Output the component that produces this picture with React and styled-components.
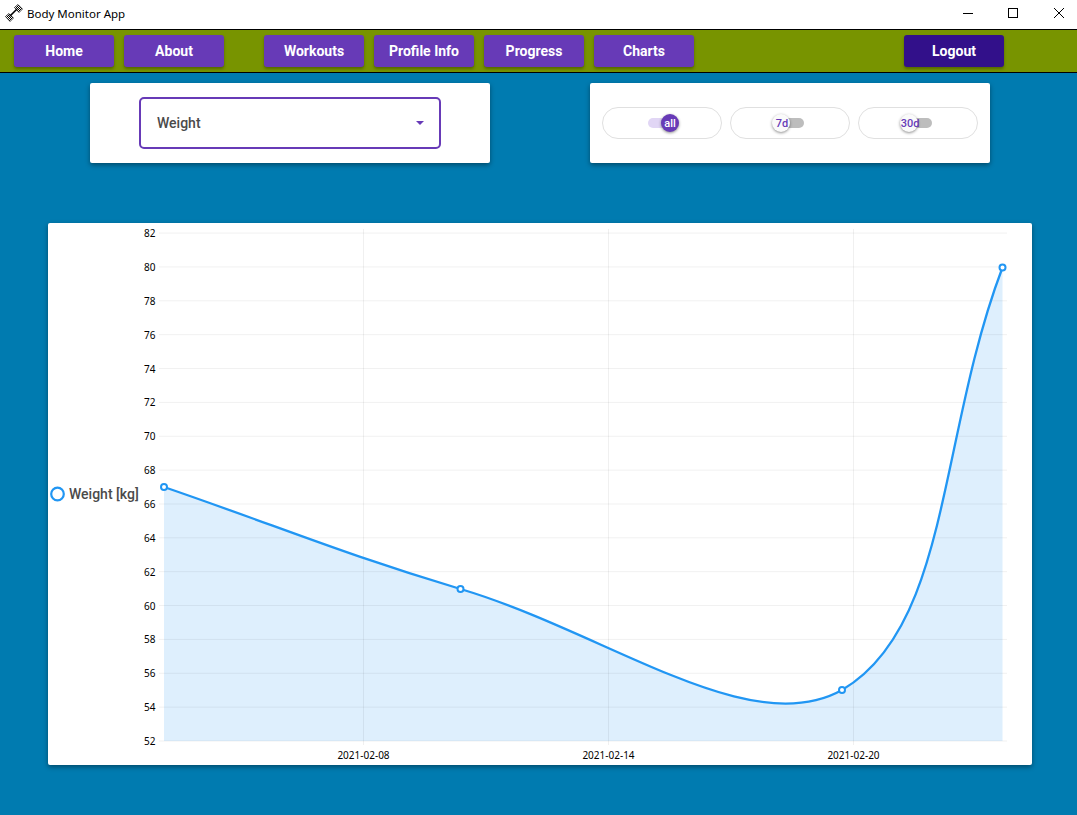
import React from "react";
import styled, { createGlobalStyle } from "styled-components";

const GlobalStyle = createGlobalStyle`
  html, body {
    margin: 0;
    padding: 0;
    background: #007bb0;
  }
  #root {
    min-height: 815px;
  }
`;

const TitleBar = styled.div`
  height: 29px;
  box-sizing: border-box;
  display: flex;
  align-items: center;
  background: #fff;
  padding: 0 13px 3px 5px;
  font-family: "Noto Sans", "Open Sans", sans-serif;
  font-size: 11.5px;
  color: #000;
`;

const AppName = styled.span`
  margin-left: 4px;
  flex: 1;
`;

const WindowButton = styled.svg`
  width: 10px;
  height: 10px;
  margin-left: ${({ $gap }) => $gap}px;
`;

const NavBar = styled.nav`
  height: 42px;
  display: flex;
  align-items: center;
  gap: 10px;
  padding-left: 14px;
  background: #789400;
  border-top: 1px solid #000;
  border-bottom: 1px solid #000;
`;

const NavButton = styled.div`
  width: 100px;
  height: 32px;
  display: flex;
  align-items: center;
  justify-content: center;
  border-radius: 3px;
  background: ${({ $dark }) => ($dark ? "#32108a" : "#673ab7")};
  color: #fff;
  font-family: Roboto, sans-serif;
  font-size: 14px;
  font-weight: 700;
  white-space: nowrap;
  margin-left: ${({ $gap }) => $gap || 0}px;
  box-shadow: 0 2px 3px rgba(0, 0, 0, 0.3);
`;

const TopRow = styled.div`
  display: flex;
  gap: 100px;
  padding: 10px 0 0 90px;
`;

const Card = styled.div`
  width: 400px;
  height: 80px;
  box-sizing: border-box;
  background: #fff;
  border-radius: 2px;
  box-shadow: 0 2px 5px rgba(0, 0, 0, 0.4);
  display: flex;
  align-items: center;
  justify-content: ${({ $spread }) => ($spread ? "flex-start" : "center")};
  gap: 8px;
  padding: ${({ $spread }) => ($spread ? "0 12px" : "0")};
`;

const Select = styled.div`
  width: 302px;
  height: 52px;
  box-sizing: border-box;
  border: 2px solid #673ab7;
  border-radius: 5px;
  display: flex;
  align-items: center;
  justify-content: space-between;
  padding: 0 15px 0 16px;
  font-family: Roboto, sans-serif;
  font-size: 14px;
  font-weight: 500;
  color: #4a4a4a;
`;

const Caret = styled.div`
  width: 0;
  height: 0;
  border-left: 4px solid transparent;
  border-right: 4px solid transparent;
  border-top: 4px solid #673ab7;
`;

const Pill = styled.div`
  width: 120px;
  height: 32px;
  box-sizing: border-box;
  border: 1px solid #e0e0e0;
  border-radius: 16px;
  display: flex;
  align-items: center;
  justify-content: center;
`;

const Track = styled.div`
  position: relative;
  width: 28px;
  height: 10px;
  border-radius: 5px;
  background: ${({ $on }) => ($on ? "#e1d6f5" : "#bdbdbd")};
`;

const Thumb = styled.div`
  position: absolute;
  top: -4px;
  left: ${({ $on }) => ($on ? "13px" : "-4px")};
  width: 18px;
  height: 18px;
  box-sizing: border-box;
  padding-left: ${({ $on }) => ($on ? "0" : "2px")};
  border-radius: 50%;
  display: flex;
  align-items: center;
  justify-content: center;
  background: ${({ $on }) => ($on ? "#673ab7" : "#fafafa")};
  color: ${({ $on }) => ($on ? "#fff" : "#673ab7")};
  font-family: Roboto, sans-serif;
  font-size: 11px;
  font-weight: 500;
  box-shadow: 0 1px 3px rgba(0, 0, 0, 0.45);
`;

const ChartCard = styled.div`
  width: 984px;
  height: 542px;
  margin: 60px 0 0 48px;
  background: #fff;
  border-radius: 2px;
  box-shadow: 0 2px 5px rgba(0, 0, 0, 0.4);
`;

const ChartSvg = styled.svg`
  display: block;
`;

const AxisLabel = styled.text`
  font-family: "Noto Sans", "Open Sans", sans-serif;
  font-size: 10px;
  fill: #000;
`;

const LegendLabel = styled.text`
  font-family: Roboto, sans-serif;
  font-size: 14px;
  font-weight: 500;
  fill: #4a4a4a;
`;

const yTicks = [82, 80, 78, 76, 74, 72, 70, 68, 66, 64, 62, 60, 58, 56, 54, 52];
const xTicks = [
  { x: 363, label: "2021-02-08" },
  { x: 608, label: "2021-02-14" },
  { x: 853, label: "2021-02-20" },
];
const points = [
  [164, 487],
  [460.5, 589],
  [842, 690],
  [1002.5, 267.5],
];
const linePath =
  "M164 487 C282.6 527.8 340.5 553.1 460.5 589 C608 633 750 742 842 690 C950 627 938.3 436.5 1002.5 267.5";

const yFor = (v) => 741 - (v - 52) * 16.93;

function Chart() {
  return (
    <ChartSvg width="984" height="542" viewBox="48 223 984 542">
      <path d={`${linePath} L1002.5 741 L164 741 Z`} fill="#2196f3" fillOpacity="0.15" />
      {yTicks.map((v) => (
        <g key={v}>
          <line x1="159" x2="1007" y1={yFor(v)} y2={yFor(v)} stroke="#000" strokeOpacity="0.06" />
          <AxisLabel x="155.5" y={yFor(v) + 4} textAnchor="end">
            {v}
          </AxisLabel>
        </g>
      ))}
      {xTicks.map((t) => (
        <g key={t.x}>
          <line x1={t.x + 0.5} x2={t.x + 0.5} y1="229" y2="745" stroke="#000" strokeOpacity="0.06" />
          <AxisLabel x={t.x + 0.5} y="759" textAnchor="middle">
            {t.label}
          </AxisLabel>
        </g>
      ))}
      <path d={linePath} fill="none" stroke="#2196f3" strokeWidth="2.3" />
      {points.map(([x, y]) => (
        <circle key={x} cx={x} cy={y} r="3" fill="#fff" stroke="#2196f3" strokeWidth="2" />
      ))}
      <circle cx="57.5" cy="494" r="6.3" fill="#fff" stroke="#2196f3" strokeWidth="2.2" />
      <LegendLabel x="69" y="499">Weight [kg]</LegendLabel>
    </ChartSvg>
  );
}

function DumbbellIcon() {
  return (
    <svg width="18" height="18" viewBox="0 0 18 18">
      <defs>
        <pattern id="dither" width="2" height="2" patternUnits="userSpaceOnUse">
          <rect width="1" height="1" fill="#000" />
          <rect x="1" y="1" width="1" height="1" fill="#000" />
        </pattern>
      </defs>
      <path d="M5 12 L12 5" stroke="#000" strokeWidth="1.6" fill="none" />
      <path d="M0.5 12.5 L4 9.5 L8.5 14 L5 17.5 Z" fill="url(#dither)" stroke="#000" strokeWidth="0.6" />
      <path d="M9.5 3.5 L13 0.5 L17.5 5 L14 8.5 Z" fill="url(#dither)" stroke="#000" strokeWidth="0.6" />
    </svg>
  );
}

function Toggle({ label, on }) {
  return (
    <Pill>
      <Track $on={on}>
        <Thumb $on={on}>{label}</Thumb>
      </Track>
    </Pill>
  );
}

export default function App() {
  return (
    <>
      <GlobalStyle />
      <TitleBar>
        <DumbbellIcon />
        <AppName>Body Monitor App</AppName>
        <WindowButton viewBox="0 0 10 10" $gap={0}>
          <path d="M0 5.5 H10" stroke="#000" />
        </WindowButton>
        <WindowButton viewBox="0 0 10 10" $gap={35}>
          <rect x="0.5" y="0.5" width="9" height="9" fill="none" stroke="#000" />
        </WindowButton>
        <WindowButton viewBox="0 0 10 10" $gap={36}>
          <path d="M0 0 L10 10 M10 0 L0 10" stroke="#000" />
        </WindowButton>
      </TitleBar>
      <NavBar>
        <NavButton>Home</NavButton>
        <NavButton>About</NavButton>
        <NavButton $gap={30}>Workouts</NavButton>
        <NavButton>Profile Info</NavButton>
        <NavButton>Progress</NavButton>
        <NavButton>Charts</NavButton>
        <NavButton $dark $gap={200}>Logout</NavButton>
      </NavBar>
      <TopRow>
        <Card>
          <Select>
            Weight
            <Caret />
          </Select>
        </Card>
        <Card $spread>
          <Toggle label="all" on />
          <Toggle label="7d" />
          <Toggle label="30d" />
        </Card>
      </TopRow>
      <ChartCard>
        <Chart />
      </ChartCard>
    </>
  );
}
